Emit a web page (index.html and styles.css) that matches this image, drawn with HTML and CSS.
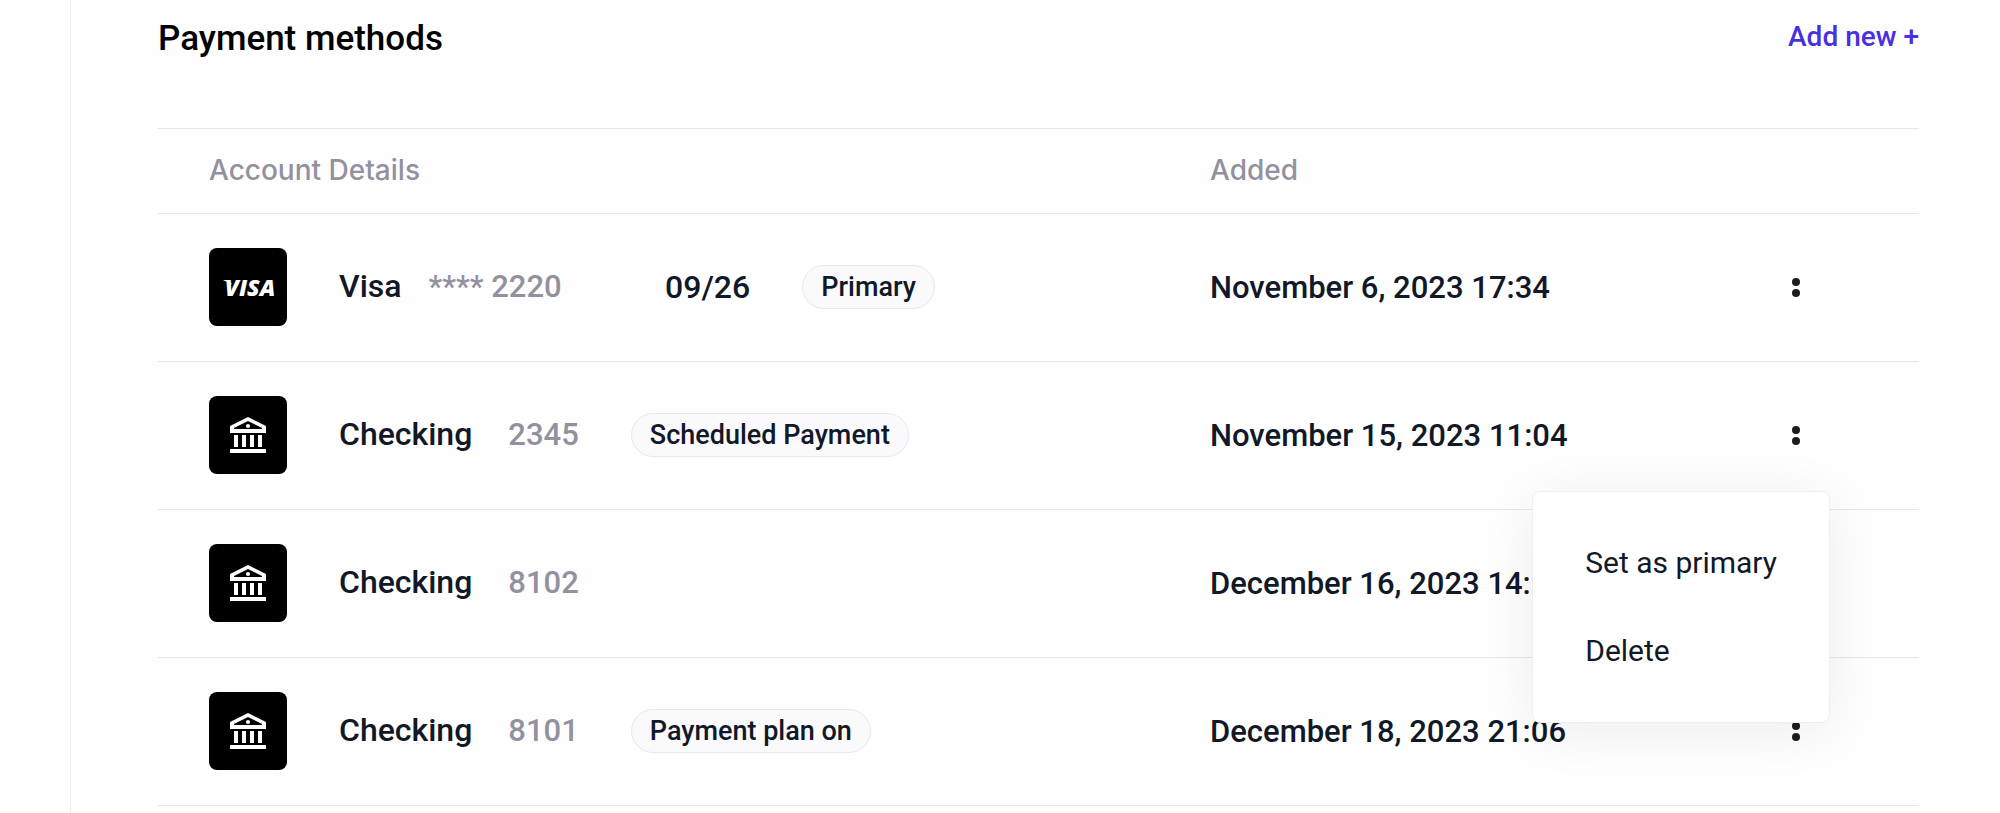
FILE: index.html
```html
<!DOCTYPE html>
<html lang="en">
<head>
	<meta charset="UTF-8">
	<title>Payment methods</title>
	<link rel="stylesheet" href="styles.css">
</head>
<body>
	<svg class="sprite" aria-hidden="true">
		<symbol id="bank" viewBox="0 0 36 36">
			<path fill="#fff" fill-rule="evenodd" d="M18 0 36 9v7H0V9zM18 4 4 11v1h28v-1z"/>
			<circle cx="18" cy="9" r="2" fill="#fff"/>
			<path fill="#fff" d="M4 18h4v12H4zM12 18h4v12h-4zM20 18h4v12h-4zM28 18h4v12h-4zM0 32h36v4H0z"/>
		</symbol>
		<symbol id="dots" viewBox="0 0 8 20">
			<circle cx="4" cy="4" r="4"/>
			<circle cx="4" cy="15" r="4"/>
		</symbol>
	</svg>
	<main class="content">
		<header class="header">
			<h1>Payment methods</h1>
			<a class="add-new" href="#">Add new +</a>
		</header>
		<table class="methods">
			<thead>
				<tr>
					<th class="col-account">Account Details</th>
					<th class="col-added">Added</th>
					<th class="col-actions"></th>
				</tr>
			</thead>
			<tbody>
				<tr>
					<td>
						<div class="account">
							<span class="icon visa">VISA</span>
							<span class="card-name">Visa <span class="number">**** 2220</span></span>
							<span class="expiry">09/26</span>
							<span class="tag">Primary</span>
						</div>
					</td>
					<td>November 6, 2023 17:34</td>
					<td class="actions"><button class="more" aria-label="More"><svg><use href="#dots"/></svg></button></td>
				</tr>
				<tr>
					<td>
						<div class="account">
							<span class="icon"><svg><use href="#bank"/></svg></span>
							<span class="bank-name">Checking <span class="number">2345</span></span>
							<span class="tag">Scheduled Payment</span>
						</div>
					</td>
					<td>November 15, 2023 11:04</td>
					<td class="actions">
						<button class="more" aria-label="More"><svg><use href="#dots"/></svg></button>
						<div class="menu">
							<button>Set as primary</button>
							<button>Delete</button>
						</div>
					</td>
				</tr>
				<tr>
					<td>
						<div class="account">
							<span class="icon"><svg><use href="#bank"/></svg></span>
							<span class="bank-name">Checking <span class="number">8102</span></span>
						</div>
					</td>
					<td>December 16, 2023 14:22</td>
					<td class="actions"><button class="more" aria-label="More"><svg><use href="#dots"/></svg></button></td>
				</tr>
				<tr>
					<td>
						<div class="account">
							<span class="icon"><svg><use href="#bank"/></svg></span>
							<span class="bank-name">Checking <span class="number">8101</span></span>
							<span class="tag">Payment plan on</span>
						</div>
					</td>
					<td>December 18, 2023 21:06</td>
					<td class="actions"><button class="more" aria-label="More"><svg><use href="#dots"/></svg></button></td>
				</tr>
			</tbody>
		</table>
	</main>
</body>
</html>
```
FILE: styles.css
```css
* {
	box-sizing: border-box;
}

body {
	margin: 0;
	background: #fefefe;
	color: #111827;
	font-family: Roboto, "Liberation Sans", sans-serif;
	font-size: 31px;
	line-height: 40px;
}

button {
	border: none;
	background: none;
	color: inherit;
	font: inherit;
	cursor: pointer;
}

.sprite {
	display: none;
}

.content {
	min-height: 100vh;
	margin-left: 70px;
	padding: 17px 81px 0 87px;
	border-left: 1px solid #ececef;
}

.header {
	display: flex;
	justify-content: space-between;
	align-items: flex-start;
	height: 111px;
}

h1 {
	margin: 0;
	color: #000;
	font-size: 35px;
	font-weight: 500;
	line-height: 44px;
}

.add-new {
	color: #4a2fe0;
	font-size: 28px;
	font-weight: 500;
	text-decoration: none;
}

.methods {
	width: 100%;
	border-collapse: collapse;
	table-layout: fixed;
	border-top: 1px solid #e5e5ea;
}

th, td {
	padding: 0 0 0 51px;
	border-bottom: 1px solid #e5e5ea;
	text-align: left;
	font-weight: 500;
	white-space: nowrap;
}

th {
	height: 85px;
	padding-bottom: 2px;
	color: #9391a0;
	font-family: Inter, sans-serif;
	font-size: 28px;
}

td {
	height: 148px;
}

.col-added {
	width: 500px;
}

.col-actions {
	width: 260px;
}

.account {
	display: flex;
	align-items: center;
	gap: 52px;
	padding-bottom: 2px;
	font-size: 32px;
}

.icon {
	display: flex;
	align-items: center;
	justify-content: center;
	width: 78px;
	height: 78px;
	border-radius: 8px;
	background: #000;
	color: #fff;
}

.icon svg {
	width: 36px;
	height: 36px;
}

.visa {
	position: relative;
	padding-left: 4px;
	font-family: "Open Sans", sans-serif;
	font-size: 23px;
	font-style: italic;
	font-weight: 800;
}

/* wing on the left of the V */
.visa::before {
	content: "";
	position: absolute;
	top: 32px;
	left: 13px;
	width: 10px;
	height: 5px;
	background: #fff;
	clip-path: polygon(0 0, 70% 0, 100% 100%);
}

.card-name, .bank-name {
	display: flex;
	align-items: baseline;
	gap: 36px;
}

.card-name {
	gap: 27px;
	min-width: 274px;
}

.number {
	color: #9391a0;
	font-size: 31px;
}

.tag {
	padding: 0 18px;
	border: 1px solid #e9e9ec;
	border-radius: 22px;
	background: #fafafc;
	font-size: 27px;
	line-height: 42px;
}

.actions {
	position: relative;
	padding: 0 103px 0 0;
	text-align: right;
}

.more {
	width: 40px;
	height: 40px;
	padding: 0;
	vertical-align: middle;
}

.more svg {
	display: block;
	width: 8px;
	height: 20px;
	margin: auto;
	fill: #1d1b1b;
}

.menu {
	position: absolute;
	z-index: 1;
	top: 129px;
	right: 89px;
	padding: 27px 0;
	border: 1px solid #efefef;
	border-radius: 8px;
	background: #fff;
	box-shadow: 0 8px 56px rgba(0, 0, 0, 0.07);
}

.menu button {
	display: block;
	width: 100%;
	padding: 24px 52px;
	text-align: left;
	font-size: 30px;
	font-weight: 400;
}
```
